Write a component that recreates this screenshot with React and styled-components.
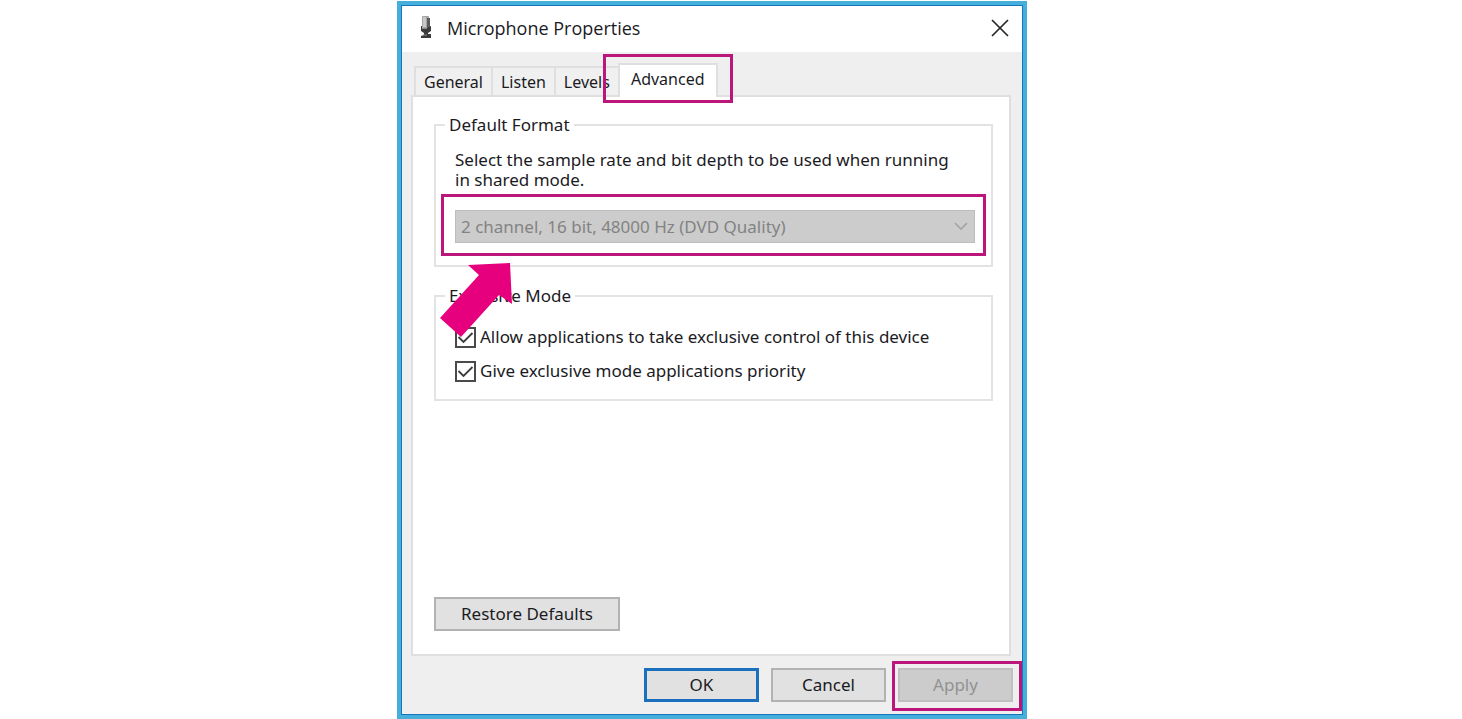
import styled, { createGlobalStyle } from "styled-components";

const GlobalStyle = createGlobalStyle`
  * {
    box-sizing: border-box;
  }
  body {
    margin: 0;
    background: #fff;
    color: #1b1b1f;
    font-family: "Noto Sans", "Open Sans", sans-serif;
    font-size: 17px;
    line-height: 20px;
  }
  button, select {
    font: inherit;
    color: inherit;
  }
`;

const Page = styled.div`
  display: grid;
  grid-template-columns: minmax(0, 397fr) minmax(auto, 630px) minmax(0, 435fr);
  padding-top: 1px;
`;

const Window = styled.main`
  grid-column: 2;
  border: 4px solid #45aedb;
  background: #efefef;
`;

const Frame = styled.div`
  border: 1px solid #1675bd;
`;

const TitleBar = styled.header`
  display: flex;
  align-items: center;
  gap: 11px;
  height: 46px;
  padding: 0 13px 2px 14px;
  background: #fff;
`;

const Title = styled.h1`
  flex: 1;
  margin: 0;
  font-family: "Open Sans", "Noto Sans", sans-serif;
  font-size: 18px;
  font-weight: 400;
`;

const CloseButton = styled.button`
  display: flex;
  padding: 0;
  border: 0;
  background: none;
`;

const Body = styled.div`
  padding: 11px 9px 12px;
`;

const Tabs = styled.div`
  display: flex;
  align-items: flex-end;
  padding-left: 3px;
`;

const Tab = styled.button`
  position: relative;
  height: ${props => props.$active ? 34 : 29}px;
  margin: ${props => props.$active ? "0 0 -2px" : "0"};
  padding: ${props => props.$active ? "0 11px 4px" : "0 8px"};
  border: 2px solid #dfdfdf;
  border-right-width: ${props => props.$active ? 2 : 0}px;
  border-bottom: 0;
  background: ${props => props.$active ? "#fff" : "#f0f0f0"};
  font-size: 16px;
`;

const Panel = styled.section`
  display: flex;
  flex-direction: column;
  min-height: 561px;
  margin-right: 2px;
  padding: 17px 16px 23px 21px;
  border: 2px solid #dfdfdf;
  background: #fff;
`;

const Group = styled.fieldset`
  position: relative;
  min-width: 0;
  margin: 0 0 18px;
  padding: 14px 16px ${props => props.$short ? 17 : 22}px 19px;
  border: 2px solid #e3e3e3;
`;

const Legend = styled.legend`
  margin-left: -10px;
  padding: 0 4px;
  line-height: 22px;
`;

const Hint = styled.label`
  display: block;
  margin-bottom: 20px;
  padding-right: 16px;
`;

const SelectBox = styled.div`
  position: relative;
`;

const Select = styled.select`
  display: block;
  width: 100%;
  height: 33px;
  padding: 0 30px 0 5px;
  appearance: none;
  border: 1px solid #bdbdbd;
  border-radius: 0;
  background: #ccc;
  color: #838383;
  opacity: 1;
`;

const Chevron = styled.svg`
  position: absolute;
  top: 12px;
  right: 7px;
  pointer-events: none;
`;

const Options = styled.div`
  display: grid;
  gap: 12px;
  padding-top: 5px;
`;

const Option = styled.label`
  display: flex;
  align-items: center;
  gap: 4px;
  line-height: 22px;
`;

const CheckBox = styled.span`
  display: grid;

  > * {
    grid-area: 1 / 1;
  }
`;

const Check = styled.input`
  width: 21px;
  height: 21px;
  margin: 0;
  appearance: none;
  border: 2px solid #4a4a4a;
  background: #fff;

  &:not(:checked) + svg {
    display: none;
  }
`;

const Tick = styled.svg`
  pointer-events: none;
`;

const Button = styled.button`
  position: relative;
  width: ${props => props.$wide ? 186 : 115}px;
  height: 34px;
  padding: 0;
  border: ${props => props.$primary ? "3px solid #1a70bd" : "2px solid #b2b2b2"};
  background: #e1e1e1;

  &:disabled {
    border-color: #c0c0c0;
    background: #ccc;
    color: #929292;
  }
`;

const Restore = styled(Button)`
  margin-top: auto;
`;

const Actions = styled.footer`
  display: flex;
  justify-content: flex-end;
  gap: 12px;
  padding-top: 12px;
`;

const Highlight = styled.span`
  position: absolute;
  z-index: 1;
  inset: ${props => props.$inset};
  border: 3px solid #bb1679;
  pointer-events: none;
`;

const Arrow = styled.svg`
  position: absolute;
  z-index: 2;
  top: 52px;
  left: -15px;
  pointer-events: none;
`;

const MicIcon = () => (
  <svg width="20" height="26" viewBox="0 0 20 26" aria-hidden="true">
    <rect x="6" y="1" width="7" height="12" rx="1" fill="#a4a4a4" />
    <rect x="7" y="2" width="3" height="10" fill="#c9c9c9" />
    <path d="M11 3h3v8h1v5h-4z" fill="#5c5c5c" />
    <path d="M5 11h1v2h6v-1h3v4l-3 2v1h3v4H5v-2l3-1v-2l-3-2z" fill="#3b3b3b" />
    <path d="M6 13.5h5M7 20h4" stroke="#888" />
  </svg>
);

const TickMark = () => (
  <Tick width="21" height="21" viewBox="0 0 21 21" fill="none" aria-hidden="true">
    <path d="M3.5 10l5 5L17.5 6" stroke="#3c3c3c" strokeWidth="1.8" />
  </Tick>
);

const options = [
  "Allow applications to take exclusive control of this device",
  "Give exclusive mode applications priority",
];

const App = () => {
  return (
    <Page>
      <GlobalStyle />
      <Window>
        <Frame>
          <TitleBar>
            <MicIcon />
            <Title>Microphone Properties</Title>
            <CloseButton aria-label="Close">
              <svg width="18" height="18" viewBox="0 0 18 18">
                <path d="M1 1l16 16M17 1L1 17" stroke="#262626" strokeWidth="1.7" />
              </svg>
            </CloseButton>
          </TitleBar>
          <Body>
            <Tabs role="tablist">
              <Tab role="tab">General</Tab>
              <Tab role="tab">Listen</Tab>
              <Tab role="tab">Levels</Tab>
              <Tab role="tab" aria-selected="true" $active>
                Advanced
                <Highlight $inset="-11px -17px -6px -17px" />
              </Tab>
            </Tabs>
            <Panel>
              <Group>
                <Legend>Default Format</Legend>
                <Hint htmlFor="format">
                  Select the sample rate and bit depth to be used when running in shared mode.
                </Hint>
                <SelectBox>
                  <Select id="format" disabled>
                    <option>2 channel, 16 bit, 48000 Hz (DVD Quality)</option>
                  </Select>
                  <Chevron width="14" height="9" viewBox="0 0 14 9" fill="none">
                    <path d="M1 1l6 6 6-6" stroke="#a3a3a3" strokeWidth="1.6" />
                  </Chevron>
                  <Highlight $inset="-16px -11px -13px -14px" />
                  <Arrow width="73" height="76" viewBox="0 0 73 76">
                    <path d="M70 1L28 3l11 10L0 56l21 19 38-42 13 9z" fill="#e6007e" />
                  </Arrow>
                </SelectBox>
              </Group>
              <Group $short>
                <Legend>Exclusive Mode</Legend>
                <Options>
                  {options.map((text) => (
                    <Option key={text}>
                      <CheckBox>
                        <Check type="checkbox" defaultChecked />
                        <TickMark />
                      </CheckBox>
                      {text}
                    </Option>
                  ))}
                </Options>
              </Group>
              <Restore $wide>Restore Defaults</Restore>
            </Panel>
            <Actions>
              <Button $primary>OK</Button>
              <Button>Cancel</Button>
              <Button disabled>
                Apply
                <Highlight $inset="-9px -11px -11px -8px" />
              </Button>
            </Actions>
          </Body>
        </Frame>
      </Window>
    </Page>
  );
};

export default App;
